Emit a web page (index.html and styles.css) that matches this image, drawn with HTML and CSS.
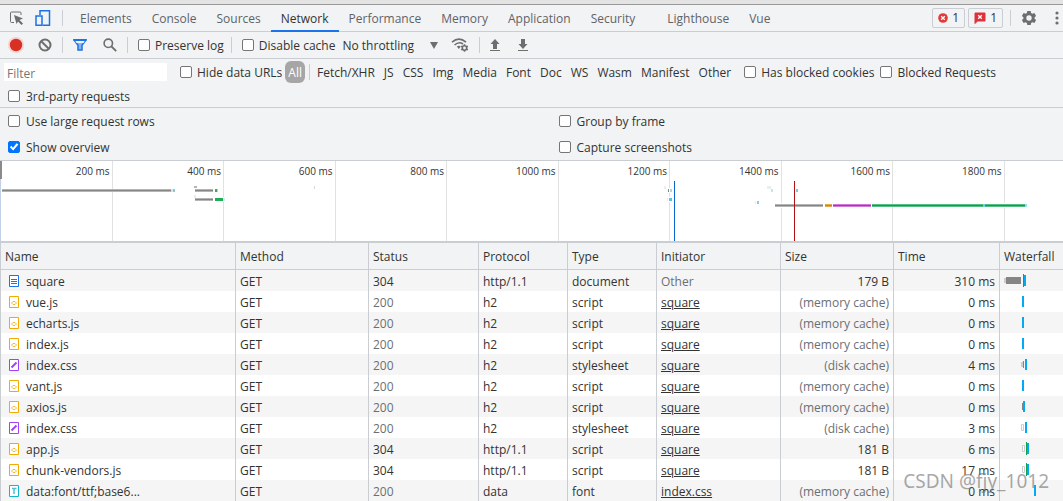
FILE: index.html
```html
<!DOCTYPE html>
<html lang="en">
<head>
  <meta charset="UTF-8">
  <meta name="viewport" content="width=device-width, initial-scale=1.0">
  <title>DevTools - Network</title>
  <link rel="stylesheet" href="styles.css">
</head>
<body>
  <svg class="sprite" aria-hidden="true">
    <symbol id="doc" viewBox="0 0 10 12">
      <path d="M.5.5h9v11h-9z" fill="#fff" stroke="#1a73e8"/>
      <path d="M2 4.500h6M2 6.500h6M2 8.500h6" stroke="#1a73e8"/>
    </symbol>
    <symbol id="js" viewBox="0 0 10 12">
      <path d="M.5.5h9v11h-9z" fill="#fff" stroke="#f2ab00"/>
      <path d="M4 5.500L2.500 7L4 8.500M6 5.500L7.500 7L6 8.500M4 5.500h2M4 8.500h2" fill="none" stroke="#f5b93a"/>
    </symbol>
    <symbol id="css" viewBox="0 0 10 12">
      <path d="M.5.5h9v11h-9z" fill="#fff" stroke="#a142f4"/>
      <path d="M2.500 8.500L7.500 3.500" stroke="#a142f4" stroke-width="2"/>
    </symbol>
    <symbol id="font" viewBox="0 0 10 12">
      <path d="M.5.5h9v11h-9z" fill="#fff" stroke="#12b5cb"/>
      <path d="M3 3.500h4.500M5 3v6" stroke="#4cc4d4" stroke-width="1.500"/>
    </symbol>
  </svg>

  <div class="window-edge"></div>

  <nav class="tabbar">
    <button class="icon-btn" aria-label="Inspect element">
      <svg width="16" height="16" viewBox="0 0 16 16"><path d="M6 12.500H3.500Q2.500 12.500 2.500 11.500V3Q2.500 2 3.500 2H12Q13 2 13 3V5" fill="none" stroke="#6e6e6e"/><path d="M6 5l9 3.500-3.500 1.500 3.500 3.500-1.500 1.500-3.500-3.500L8.500 14z" fill="#6e6e6e"/></svg>
    </button>
    <button class="icon-btn" aria-label="Toggle device toolbar">
      <svg width="16" height="16" viewBox="0 0 16 16"><path d="M5 5V.8h9.500V15.200H8" fill="none" stroke="#1a73e8" stroke-width="1.500"/><path d="M1 6h6v9.200H1z" fill="none" stroke="#1a73e8" stroke-width="1.500"/></svg>
    </button>
    <span class="divider"></span>
    <div class="tabs">
      <a href="#">Elements</a>
      <a href="#">Console</a>
      <a href="#">Sources</a>
      <a href="#" class="active">Network</a>
      <a href="#">Performance</a>
      <a href="#">Memory</a>
      <a href="#">Application</a>
      <a href="#">Security</a>
      <a href="#" class="extension">Lighthouse</a>
      <a href="#">Vue</a>
    </div>
    <button class="count" aria-label="1 error">
      <svg width="10" height="10" viewBox="0 0 10 10"><circle cx="5" cy="5" r="4.800" fill="#e33a3a"/><path d="M3.200 3.200l3.600 3.600M6.800 3.200L3.200 6.800" stroke="#fff" stroke-width="1.300"/></svg>
      <span>1</span>
    </button>
    <button class="count" aria-label="1 issue">
      <svg width="12" height="12" viewBox="0 0 12 12"><path d="M1 1h10v8H3.500L1 11.500z" fill="#e0303c" stroke="#e0303c" stroke-linejoin="round"/><path d="M4.200 3.200l3.600 3.600M7.800 3.200L4.200 6.800" stroke="#fff" stroke-width="1.300"/></svg>
      <span>1</span>
    </button>
    <span class="divider"></span>
    <button class="icon-btn settings" aria-label="Settings">
      <svg width="16" height="16" viewBox="0 0 16 16"><path fill="#6e6e6e" fill-rule="evenodd" d="M6.300 1h3.400l.4 2 1.300.8 2-.7 1.700 2.900-1.500 1.300v1.400l1.500 1.300-1.700 2.900-2-.7-1.300.8-.4 2H6.300l-.4-2-1.300-.8-2 .7L.9 10l1.500-1.300V7.300L.9 6l1.700-2.900 2 .7L5.900 3zM8 5.300a2.700 2.700 0 100 5.400 2.700 2.700 0 000-5.400z"/></svg>
    </button>
    <button class="icon-btn more" aria-label="More options">
      <svg width="4" height="14" viewBox="0 0 4 14"><g fill="#6e6e6e"><circle cx="2" cy="2" r="1.600"/><circle cx="2" cy="7" r="1.600"/><circle cx="2" cy="12" r="1.600"/></g></svg>
    </button>
  </nav>

  <div class="toolbar">
    <button class="icon-btn" aria-label="Stop recording">
      <svg width="18" height="18" viewBox="0 0 18 18"><circle cx="9" cy="9" r="8" fill="#f6d3d1"/><circle cx="9" cy="9" r="6.200" fill="#d93025"/></svg>
    </button>
    <button class="icon-btn clear" aria-label="Clear">
      <svg width="14" height="14" viewBox="0 0 14 14"><circle cx="7" cy="7" r="5.500" fill="none" stroke="#6e6e6e" stroke-width="2"/><path d="M3 3l8 8" stroke="#6e6e6e" stroke-width="2"/></svg>
    </button>
    <span class="divider"></span>
    <button class="icon-btn" aria-label="Filter">
      <svg width="14" height="12" viewBox="0 0 14 12"><path d="M1.200 1h11.600L9 6.200V11H5V6.200z" fill="#8bb4ef" stroke="#1a73e8" stroke-width="1.500"/><path d="M2 1.500h10L10.500 4h-7z" fill="#f1f3f4"/><path d="M.5 1h13" stroke="#1a73e8" stroke-width="2"/></svg>
    </button>
    <button class="icon-btn" aria-label="Search">
      <svg width="14" height="14" viewBox="0 0 14 14"><circle cx="5.300" cy="5.300" r="4.200" fill="none" stroke="#6e6e6e" stroke-width="1.600"/><path d="M8.500 8.500l4.700 4.700" stroke="#6e6e6e" stroke-width="1.800"/></svg>
    </button>
    <span class="divider"></span>
    <label class="check"><input type="checkbox">Preserve log</label>
    <span class="divider"></span>
    <label class="check"><input type="checkbox">Disable cache</label>
    <div class="throttling">
      <select aria-label="Throttling">
        <option>No throttling</option>
      </select>
      <svg width="8" height="7" viewBox="0 0 8 7"><path d="M0 0h8L4 7z" fill="#6e6e6e"/></svg>
    </div>
    <button class="icon-btn" aria-label="Network conditions">
      <svg width="18" height="16" viewBox="0 0 18 16"><g fill="none" stroke="#6e6e6e" stroke-width="1.600"><path d="M1 5.200Q8 -1 15 5.200"/><path d="M3.500 8Q8 4 12 7"/></g><path d="M5.800 9.500Q8 8 9.800 9.500L7.800 12z" fill="#6e6e6e"/><circle cx="13.500" cy="11" r="2.200" fill="none" stroke="#6e6e6e" stroke-width="1.600"/><path d="M13.500 7.200v1.500M13.500 13.300v1.500M10.200 9.100l1.300.8M15.500 12.100l1.300.8M10.200 12.900l1.300-.8M15.500 9.900l1.300-.8" stroke="#6e6e6e" stroke-width="1.500"/></svg>
    </button>
    <span class="divider"></span>
    <button class="icon-btn" aria-label="Import HAR file">
      <svg width="10" height="13" viewBox="0 0 10 13"><path d="M5 0l4.500 5H7v5H3V5H.5z" fill="#6e6e6e"/><path d="M0 11.500h10" stroke="#6e6e6e"/></svg>
    </button>
    <button class="icon-btn export" aria-label="Export HAR file">
      <svg width="10" height="13" viewBox="0 0 10 13"><path d="M5 10l4.500-5H7V0H3v5H.5z" fill="#6e6e6e"/><path d="M0 11.500h10" stroke="#6e6e6e"/></svg>
    </button>
  </div>

  <div class="filterbar">
    <div class="filter-row">
      <input type="text" class="filter-input" placeholder="Filter" aria-label="Filter">
      <label class="check"><input type="checkbox">Hide data URLs</label>
      <div class="types">
        <button class="selected">All</button>
        <span class="divider"></span>
        <button>Fetch/XHR</button>
        <button>JS</button>
        <button>CSS</button>
        <button>Img</button>
        <button>Media</button>
        <button>Font</button>
        <button>Doc</button>
        <button>WS</button>
        <button>Wasm</button>
        <button>Manifest</button>
        <button>Other</button>
      </div>
      <label class="check"><input type="checkbox">Has blocked cookies</label>
      <label class="check"><input type="checkbox">Blocked Requests</label>
    </div>
    <div class="third-party">
      <label class="check"><input type="checkbox">3rd-party requests</label>
    </div>
  </div>

  <div class="options">
    <label class="check"><input type="checkbox">Use large request rows</label>
    <label class="check"><input type="checkbox">Group by frame</label>
    <label class="check"><input type="checkbox" checked>Show overview</label>
    <label class="check"><input type="checkbox">Capture screenshots</label>
  </div>

  <div class="overview">
    <div class="ticks">
      <span>200 ms</span>
      <span>400 ms</span>
      <span>600 ms</span>
      <span>800 ms</span>
      <span>1000 ms</span>
      <span>1200 ms</span>
      <span>1400 ms</span>
      <span>1600 ms</span>
      <span>1800 ms</span>
    </div>
    <svg class="bars" viewBox="0 0 1063 80" preserveAspectRatio="none" shape-rendering="crispEdges">
      <rect x="0" y="0" width="1" height="80" fill="#c3cfe6"/>
      <rect x="0" y="0" width="2" height="18" fill="#8a8a8a"/>
      <g fill="#fff">
        <rect x="111" y="27" width="1" height="5"/>
        <rect x="223" y="36" width="2" height="5"/>
        <rect x="669" y="27" width="2" height="5"/>
        <rect x="669" y="36" width="2" height="5"/>
        <rect x="781" y="42" width="2" height="5"/>
        <rect x="893" y="42" width="1" height="5"/>
        <rect x="1004" y="42" width="1" height="5"/>
      </g>
      <g fill="#b5b5b5">
        <rect x="2" y="28" width="169" height="3"/>
        <rect x="195" y="28" width="18" height="3"/>
        <rect x="195" y="37" width="18" height="3"/>
        <rect x="194" y="25" width="3" height="2"/>
        <rect x="775" y="43" width="48" height="3"/>
      </g>
      <g fill="#858585">
        <rect x="2" y="29" width="169" height="1"/>
        <rect x="195" y="29" width="18" height="1"/>
        <rect x="195" y="38" width="18" height="1"/>
        <rect x="775" y="44" width="48" height="1"/>
        <rect x="668" y="28" width="1" height="3"/>
      </g>
      <rect x="171" y="28" width="2" height="3" fill="#efe2c8"/>
      <rect x="173" y="28" width="2" height="3" fill="#78cdea"/>
      <rect x="215" y="28" width="2" height="3" fill="#36ad63"/>
      <rect x="217" y="28" width="1" height="3" fill="#9adfe5"/>
      <rect x="194" y="34" width="2" height="3" fill="#dceffa"/>
      <rect x="215" y="37" width="8" height="3" fill="#20ad58"/>
      <rect x="223" y="37" width="2" height="3" fill="#cceafa"/>
      <rect x="314" y="25" width="1" height="3" fill="#d8d8d8"/>
      <rect x="664" y="25" width="2" height="3" fill="#eee"/>
      <rect x="670" y="28" width="2" height="3" fill="#a8dbd9"/>
      <rect x="667" y="37" width="1" height="3" fill="#dceffa"/>
      <rect x="669" y="37" width="3" height="3" fill="#62bfdf"/>
      <rect x="755" y="40" width="1" height="3" fill="#dceffa"/>
      <rect x="757" y="40" width="2" height="3" fill="#82cde5"/>
      <rect x="767" y="25" width="4" height="3" fill="#ededed"/>
      <rect x="771" y="28" width="2" height="3" fill="#bce6f2"/>
      <rect x="796" y="28" width="2" height="3" fill="#7fc7e8"/>
      <rect x="825" y="43" width="7" height="3" fill="#e6a84c"/>
      <rect x="825" y="44" width="7" height="1" fill="#d98312"/>
      <rect x="833" y="43" width="38" height="3" fill="#d377db"/>
      <rect x="833" y="44" width="38" height="1" fill="#b02fc2"/>
      <rect x="872" y="43" width="153" height="3" fill="#53c184"/>
      <rect x="872" y="44" width="153" height="1" fill="#119b4b"/>
      <rect x="983" y="43" width="2" height="3" fill="#7bcbe0"/>
      <rect x="1025" y="43" width="2" height="3" fill="#9bd9ee"/>
      <rect x="674" y="20" width="1" height="60" fill="#0867cb"/>
      <rect x="794" y="20" width="1" height="60" fill="#b01212"/>
    </svg>
  </div>

  <table class="requests">
    <colgroup>
      <col class="col-name"><col class="col-method"><col class="col-status">
      <col class="col-protocol"><col class="col-type"><col class="col-initiator">
      <col class="col-size"><col class="col-time"><col>
    </colgroup>
    <thead>
      <tr><th>Name</th><th>Method</th><th>Status</th><th>Protocol</th><th>Type</th><th>Initiator</th><th>Size</th><th>Time</th><th>Waterfall</th></tr>
    </thead>
    <tbody>
      <tr>
        <td><div class="file"><svg width="10" height="12"><use href="#doc"/></svg>square</div></td>
        <td>GET</td><td>304</td><td>http/1.1</td><td>document</td><td class="dim">Other</td>
        <td class="num">179 B</td><td class="num">310 ms</td>
        <td class="wf"><svg width="58" height="21"><path d="M4 8h2v5H4z" fill="#ccc"/><path d="M6 7h15v7H6z" fill="#858585"/><path d="M23 4h1v13h-1z" fill="#12a150"/><path d="M24 5h2v11h-2z" fill="#03a9f4"/></svg></td>
      </tr>
      <tr>
        <td><div class="file"><svg width="10" height="12"><use href="#js"/></svg>vue.js</div></td>
        <td>GET</td><td class="dim">200</td><td>h2</td><td>script</td><td><a href="#">square</a></td>
        <td class="num dim">(memory cache)</td><td class="num">0 ms</td>
        <td class="wf"><svg width="58" height="21"><path d="M22 5h2v11h-2z" fill="#03a9f4"/></svg></td>
      </tr>
      <tr>
        <td><div class="file"><svg width="10" height="12"><use href="#js"/></svg>echarts.js</div></td>
        <td>GET</td><td class="dim">200</td><td>h2</td><td>script</td><td><a href="#">square</a></td>
        <td class="num dim">(memory cache)</td><td class="num">0 ms</td>
        <td class="wf"><svg width="58" height="21"><path d="M22 5h2v11h-2z" fill="#03a9f4"/></svg></td>
      </tr>
      <tr>
        <td><div class="file"><svg width="10" height="12"><use href="#js"/></svg>index.js</div></td>
        <td>GET</td><td class="dim">200</td><td>h2</td><td>script</td><td><a href="#">square</a></td>
        <td class="num dim">(memory cache)</td><td class="num">0 ms</td>
        <td class="wf"><svg width="58" height="21"><path d="M22 5h2v11h-2z" fill="#03a9f4"/></svg></td>
      </tr>
      <tr>
        <td><div class="file"><svg width="10" height="12"><use href="#css"/></svg>index.css</div></td>
        <td>GET</td><td class="dim">200</td><td>h2</td><td>stylesheet</td><td><a href="#">square</a></td>
        <td class="num dim">(disk cache)</td><td class="num">4 ms</td>
        <td class="wf"><svg width="58" height="21"><path d="M21 8h2v5h-2z" fill="#ccc"/><path d="M23 7h1v7h-1z" fill="#858585"/><path d="M25 5h2v11h-2z" fill="#03a9f4"/></svg></td>
      </tr>
      <tr>
        <td><div class="file"><svg width="10" height="12"><use href="#js"/></svg>vant.js</div></td>
        <td>GET</td><td class="dim">200</td><td>h2</td><td>script</td><td><a href="#">square</a></td>
        <td class="num dim">(memory cache)</td><td class="num">0 ms</td>
        <td class="wf"><svg width="58" height="21"><path d="M22 5h2v11h-2z" fill="#03a9f4"/></svg></td>
      </tr>
      <tr>
        <td><div class="file"><svg width="10" height="12"><use href="#js"/></svg>axios.js</div></td>
        <td>GET</td><td class="dim">200</td><td>h2</td><td>script</td><td><a href="#">square</a></td>
        <td class="num dim">(memory cache)</td><td class="num">0 ms</td>
        <td class="wf"><svg width="58" height="21"><path d="M22 7h1v7h-1z" fill="#858585"/><path d="M23 5h2v11h-2z" fill="#03a9f4"/></svg></td>
      </tr>
      <tr>
        <td><div class="file"><svg width="10" height="12"><use href="#css"/></svg>index.css</div></td>
        <td>GET</td><td class="dim">200</td><td>h2</td><td>stylesheet</td><td><a href="#">square</a></td>
        <td class="num dim">(disk cache)</td><td class="num">3 ms</td>
        <td class="wf"><svg width="58" height="21"><path d="M21.500 7.500h2v6h-2z" fill="#fff" stroke="#ccc"/><path d="M25 5h2v11h-2z" fill="#03a9f4"/></svg></td>
      </tr>
      <tr>
        <td><div class="file"><svg width="10" height="12"><use href="#js"/></svg>app.js</div></td>
        <td>GET</td><td>304</td><td>http/1.1</td><td>script</td><td><a href="#">square</a></td>
        <td class="num">181 B</td><td class="num">6 ms</td>
        <td class="wf"><svg width="58" height="21"><path d="M22.500 7.500h2v6h-2z" fill="#fff" stroke="#ccc"/><path d="M26 4h1v13h-1z" fill="#12a150"/><path d="M27 5h2v11h-2z" fill="#03a9f4"/></svg></td>
      </tr>
      <tr>
        <td><div class="file"><svg width="10" height="12"><use href="#js"/></svg>chunk-vendors.js</div></td>
        <td>GET</td><td>304</td><td>http/1.1</td><td>script</td><td><a href="#">square</a></td>
        <td class="num">181 B</td><td class="num">17 ms</td>
        <td class="wf"><svg width="58" height="21"><path d="M22.500 7.500h2v6h-2z" fill="#fff" stroke="#ccc"/><path d="M26 4h1v13h-1z" fill="#12a150"/><path d="M27 5h2v11h-2z" fill="#03a9f4"/></svg></td>
      </tr>
      <tr>
        <td><div class="file"><svg width="10" height="12"><use href="#font"/></svg>data:font/ttf;base6...</div></td>
        <td>GET</td><td class="dim">200</td><td>data</td><td>font</td><td><a href="#">index.css</a></td>
        <td class="num dim">(memory cache)</td><td class="num">0 ms</td>
        <td class="wf"><svg width="58" height="21"><path d="M34 5h2v11h-2z" fill="#03a9f4"/></svg></td>
      </tr>
    </tbody>
  </table>

  <div class="watermark">CSDN @fjy_1012</div>
</body>
</html>
```

FILE: styles.css
```css
* {
  box-sizing: border-box;
}
body {
  margin: 0;
  position: relative;
  font-family: "Open Sans", "Noto Sans", sans-serif;
  font-size: 12px;
  line-height: 16px;
  color: #333;
  background: #fff;
}
button, input, select {
  font: inherit;
  color: inherit;
  margin: 0;
  padding: 0;
  border: none;
  background: none;
}
svg {
  display: block;
  flex: none;
}
.sprite {
  display: none;
}
.window-edge {
  height: 5px;
  background: #e3e3e3;
  border-bottom: 1px solid #999;
}
.divider {
  flex: none;
  width: 1px;
  height: 16px;
  background: #cacdd1;
}
.icon-btn {
  flex: none;
}

/* main tabs */
.tabbar {
  display: flex;
  align-items: center;
  height: 27px;
  padding: 0 4px 0 8px;
  background: #f1f3f4;
  border-bottom: 1px solid #cacdd1;
}
.tabbar .icon-btn + .icon-btn {
  margin-left: 11px;
}
.tabbar .icon-btn + .divider {
  margin-left: 11px;
}
.tabs {
  display: flex;
  flex: 1;
  align-self: stretch;
  margin: 0 0 -1px 7px;
}
.tabs a {
  padding: 0 10px;
  line-height: 27px;
  color: #5f6368;
  text-decoration: none;
}
.tabs a.active {
  color: #333;
  border-bottom: 2px solid #1a73e8;
}
.tabs .extension {
  margin-left: 12px;
}
.count {
  display: flex;
  align-items: center;
  gap: 4px;
  height: 20px;
  margin-right: 3px;
  padding: 0 5px;
  border: 1px solid #cacdd1;
  border-radius: 2px;
}
.count + .divider {
  margin-left: 4px;
}
.settings {
  margin-left: 10px;
}
.tabbar .icon-btn.more {
  margin-left: 18px;
}

/* network toolbar */
.toolbar {
  display: flex;
  align-items: center;
  gap: 10px;
  height: 27px;
  padding: 0 7px;
  background: #f1f3f4;
  border-bottom: 1px solid #cacdd1;
}
.toolbar .icon-btn + .icon-btn {
  margin-left: 6px;
}
.toolbar .icon-btn.clear {
  margin-left: 3px;
}
.toolbar .icon-btn.export {
  margin-left: 8px;
}
.check {
  display: flex;
  align-items: center;
  gap: 6px;
  padding-top: 2px;
  white-space: nowrap;
}
.check input {
  appearance: none;
  flex: none;
  width: 12px;
  height: 12px;
  margin-bottom: 2px;
  background: #fff;
  border: 1px solid #767676;
  border-radius: 2px;
}
.check input:checked {
  background: #0075ff;
  border-color: #0075ff;
}
.check input:checked::after {
  content: "";
  display: block;
  height: 10px;
  background: #fff;
  clip-path: polygon(8% 52%, 24% 38%, 40% 58%, 76% 12%, 94% 26%, 42% 86%);
}
.toolbar .check, .filter-row .check {
  gap: 5px;
}
.toolbar .check {
  margin-right: -3px;
}
.throttling {
  display: flex;
  align-items: center;
}
.throttling select {
  appearance: none;
  width: 88px;
  padding-top: 2px;
}
.throttling svg {
  margin-right: 3px;
}

/* filters */
.filterbar {
  height: 49px;
  background: #f1f3f4;
  border-bottom: 1px solid #cacdd1;
}
.filter-row {
  display: flex;
  align-items: center;
  gap: 6px;
  height: 26px;
  padding: 0 4px;
}
.filter-input {
  width: 163px;
  height: 18px;
  margin-right: 7px;
  padding: 2px 3px 0;
  background: #fff;
}
.filter-input::placeholder {
  color: #757575;
}
.types {
  display: flex;
  align-items: center;
  gap: 9px;
  margin: 0 7px 0 -3px;
}
.types button {
  padding-top: 2px;
}
.types .divider {
  margin: 0 -2px 0 -5px;
}
.types .selected {
  height: 22px;
  padding: 1px 3px 0;
  color: #fff;
  background: #a6a6a6;
  border-radius: 6px;
}
.third-party {
  display: flex;
  align-items: center;
  height: 22px;
  padding: 0 8px;
}

.options {
  display: grid;
  grid-template-columns: 1fr 1fr;
  column-gap: 54px;
  height: 53px;
  padding: 0 8px;
  background: #f1f3f4;
  border-bottom: 1px solid #cacdd1;
}

/* timeline overview */
.overview {
  display: grid;
  height: 82px;
  border-bottom: 2px solid #cacdd1;
}
.ticks, .bars {
  grid-area: 1 / 1;
  width: 100%;
  height: 80px;
}
.ticks {
  display: flex;
  padding-left: 1px;
  font-size: 10px;
  line-height: 21px;
  text-align: right;
}
.ticks span {
  width: 10.5%;
  padding-right: 2px;
  border-right: 1px solid #e1e1e1;
}

/* request list */
.requests {
  width: 100%;
  table-layout: fixed;
  border-collapse: separate;
  border-spacing: 0;
  border-left: 1px solid #cacdd1;
}
.col-name { width: 235px; }
.col-method { width: 133px; }
.col-status { width: 110px; }
.col-protocol { width: 89px; }
.col-type { width: 89px; }
.col-initiator { width: 124px; }
.col-size { width: 113px; }
.col-time { width: 106px; }
.requests th, .requests td {
  height: 21px;
  padding: 2px 4px 0;
  text-align: left;
  white-space: nowrap;
  overflow: hidden;
  border-right: 1px solid #cacdd1;
}
.requests th {
  height: 27px;
  font-weight: normal;
  background: #f1f3f4;
  border-bottom: 1px solid #cacdd1;
}
.requests th:last-child, .requests td:last-child {
  border-right: none;
}
.requests tbody tr:nth-child(odd) {
  background: #f5f5f5;
}
.requests .num {
  text-align: right;
}
.requests .dim {
  color: #6b6f73;
}
.requests a {
  color: inherit;
}
.requests .wf {
  padding: 0;
}
.file {
  display: flex;
  align-items: center;
  gap: 7px;
  padding-left: 4px;
}
.file svg {
  margin-bottom: 2px;
}

.watermark {
  position: absolute;
  right: 14px;
  bottom: 6px;
  font-family: "Noto Sans", sans-serif;
  font-size: 19px;
  line-height: 28px;
  color: rgba(110, 110, 110, 0.6);
}
```
